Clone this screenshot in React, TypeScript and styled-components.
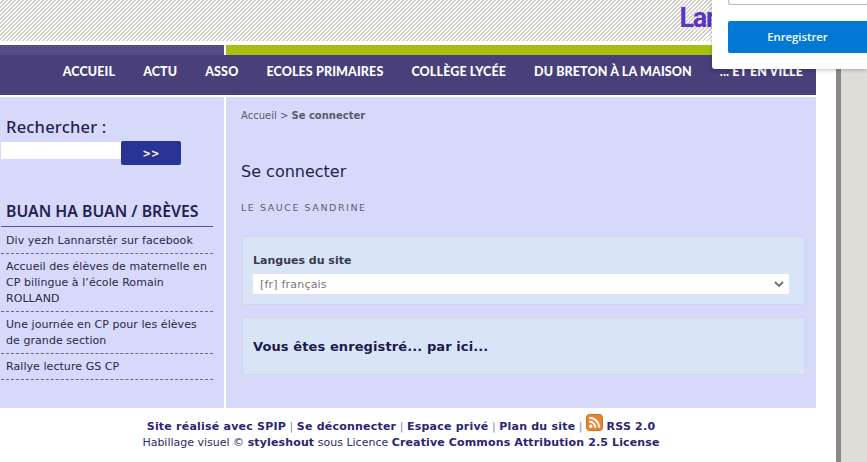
import React from 'react';
import styled, { createGlobalStyle } from 'styled-components';

const GlobalStyle = createGlobalStyle`
  html, body {
    margin: 0;
    padding: 0;
    background: #ffffff;
    overflow: hidden;
  }
`;

const Frame = styled.div`
  position: relative;
  display: flex;
  width: 867px;
  height: 462px;
  overflow: hidden;
  font-family: "DejaVu Sans", Verdana, sans-serif;
`;

const Site = styled.div`
  display: flex;
  flex-direction: column;
  width: 816px;
  flex-shrink: 0;
`;

const Rail = styled.div`
  width: 20px;
  flex-shrink: 0;
  background: #ffffff;
`;

const Edge = styled.div`
  width: 5px;
  flex-shrink: 0;
  background: #8a8883;
`;

const Backdrop = styled.div`
  flex: 1;
  background: #e0dcd8;
`;

const Stripes = styled.div`
  height: 41px;
  margin-right: -20px;
  background: repeating-linear-gradient(
    135deg,
    #ffffff 0,
    #ffffff 1.83px,
    #cfcfc8 1.83px,
    #cfcfc8 2.83px
  );
  display: flex;
  justify-content: flex-end;
`;

const Logo = styled.span`
  margin: 2px 116px 0 0;
  font-family: "Roboto", sans-serif;
  font-weight: 700;
  font-size: 27px;
  line-height: 33px;
  letter-spacing: -1.2px;
  color: #5b35c4;
`;

const ColorBand = styled.div`
  display: grid;
  grid-template-columns: 224px 2px 1fr;
  height: 10px;
  margin-top: 4px;
`;

const BandPart = styled.div<{ $color: string }>`
  background: ${(p) => p.$color};
`;

const Nav = styled.nav`
  display: flex;
  justify-content: flex-end;
  align-items: center;
  gap: 28px;
  box-sizing: border-box;
  height: 40px;
  padding: 0 13px 8px 0;
  background: #483f7b;
`;

const NavItem = styled.a`
  font-family: "Lato", sans-serif;
  font-weight: 900;
  font-size: 12.5px;
  letter-spacing: 0.12px;
  color: #ffffff;
  white-space: nowrap;
`;

const Columns = styled.div`
  display: grid;
  grid-template-columns: 224px 590px;
  column-gap: 2px;
  height: 311px;
  margin-top: 2px;
`;

const Sidebar = styled.aside`
  background: #d6d9f9;
  padding-top: 20px;
`;

const SearchTitle = styled.h2`
  margin: 0 0 4px 6px;
  font-family: "Noto Sans", sans-serif;
  font-weight: 500;
  font-size: 16.5px;
  line-height: 20px;
  letter-spacing: 0.2px;
  color: #241f52;
`;

const SearchRow = styled.form`
  display: flex;
  align-items: flex-start;
  margin-left: 1px;
`;

const SearchInput = styled.div`
  width: 120px;
  height: 17px;
  margin-top: 1px;
  background: #ffffff;
`;

const SearchButton = styled.button`
  width: 60px;
  height: 24px;
  padding: 0;
  border: none;
  border-radius: 2px;
  background: #2a3494;
  color: #ffffff;
  font-family: "DejaVu Sans", sans-serif;
  font-weight: 700;
  font-size: 10px;
`;

const NewsTitle = styled.h2`
  margin: 36px 11px 0 1px;
  padding: 0 0 5px 5px;
  border-bottom: 1px solid #5b5690;
  font-family: "Noto Sans", sans-serif;
  font-weight: 600;
  font-size: 15.8px;
  line-height: 20px;
  color: #241f52;
`;

const NewsList = styled.ul`
  margin: 0 11px 0 1px;
  padding: 1px 0 0;
  list-style: none;
`;

const NewsItem = styled.li`
  padding: 5px 5px 4px;
  border-bottom: 1px dashed #6a678c;
  font-size: 11px;
  line-height: 16px;
  letter-spacing: 0.06px;
  color: #2a2846;
`;

const Main = styled.main`
  background: #d6d9f9;
  padding: 12px 11px 0 15px;
`;

const Breadcrumb = styled.div`
  font-size: 10px;
  line-height: 13px;
  color: #5a5a70;

  strong {
    font-weight: 700;
  }
`;

const PageTitle = styled.h1`
  margin: 40px 0 0;
  font-family: "DejaVu Sans", sans-serif;
  font-weight: 400;
  font-size: 16px;
  line-height: 20px;
  color: #241f52;
`;

const Author = styled.div`
  margin-top: 20px;
  font-size: 9.5px;
  line-height: 12px;
  letter-spacing: 1.55px;
  color: #5f5f73;
`;

const Panel = styled.section<{ $height: number; $top: number }>`
  box-sizing: border-box;
  height: ${(p) => p.$height}px;
  margin: ${(p) => p.$top}px 0 0 1px;
  padding: 0 15px 0 10px;
  background: #d9e4f7;
  border: 1px solid #d2d6e8;
`;

const FieldLabel = styled.label`
  display: block;
  margin-top: 17px;
  font-size: 11px;
  font-weight: 700;
  line-height: 14px;
  color: #3b3b4c;
`;

const LanguageSelect = styled.div`
  display: flex;
  align-items: center;
  justify-content: space-between;
  height: 20px;
  margin-top: 6px;
  padding: 0 4px 0 7px;
  background: #ffffff;
  font-size: 11px;
  letter-spacing: 0.2px;
  color: #77777f;
`;

const Registered = styled.div`
  margin-top: 20px;
  font-size: 13px;
  font-weight: 700;
  line-height: 17px;
  letter-spacing: 0.1px;
  color: #1d1a4d;
`;

const Footer = styled.footer`
  padding: 11px 14px 0 0;
  text-align: center;
  font-size: 11px;
  line-height: 16px;
  color: #2d2a5e;
`;

const FooterLine = styled.div`
  white-space: nowrap;
`;

const FooterLink = styled.a<{ $tight?: boolean }>`
  font-weight: 700;
  letter-spacing: ${(p) => (p.$tight ? '0.14px' : '0.22px')};
  color: #2b2473;
`;

const Bar = styled.span`
  color: #7d8cb0;
`;

const RssIcon = styled.svg`
  width: 17px;
  height: 17px;
  vertical-align: -1px;
  margin: -5px 0 0;
`;

const Popup = styled.div`
  position: absolute;
  top: 0;
  left: 712px;
  right: 0;
  height: 69px;
  padding-left: 16px;
  background: #ffffff;
  border-bottom-left-radius: 3px;
  box-shadow: 0 1px 4px rgba(0, 0, 0, 0.25);
`;

const PopupField = styled.div`
  height: 4px;
  border: 1px solid #b9b9b9;
  border-top: none;
  border-right: none;
  border-bottom-left-radius: 3px;
`;

const SaveButton = styled.button`
  display: block;
  width: 100%;
  height: 32px;
  margin-top: 16px;
  padding: 0 0 2px;
  border: none;
  border-radius: 2px 0 0 2px;
  background: #0078d4;
  color: #ffffff;
  font-family: "Open Sans", sans-serif;
  font-weight: 600;
  font-size: 11.3px;
`;

const navLinks = [
  'ACCUEIL',
  'ACTU',
  'ASSO',
  'ECOLES PRIMAIRES',
  'COLLÈGE LYCÉE',
  'DU BRETON À LA MAISON',
  '... ET EN VILLE',
];

const news = [
  'Div yezh Lannarstêr sur facebook',
  'Accueil des élèves de maternelle en CP bilingue à l’école Romain ROLLAND',
  'Une journée en CP pour les élèves de grande section',
  'Rallye lecture GS CP',
];

const App: React.FC = () => {
  return (
    <Frame>
      <GlobalStyle />
      <Site>
        <Stripes>
          <Logo>Lan</Logo>
        </Stripes>
        <ColorBand>
          <BandPart $color="#554c8a" />
          <BandPart $color="#ffffff" />
          <BandPart $color="#a8bf12" />
        </ColorBand>
        <Nav>
          {navLinks.map((link) => (
            <NavItem key={link}>{link}</NavItem>
          ))}
        </Nav>
        <Columns>
          <Sidebar>
            <SearchTitle>Rechercher :</SearchTitle>
            <SearchRow>
              <SearchInput />
              <SearchButton type="button">&gt;&gt;</SearchButton>
            </SearchRow>
            <NewsTitle>BUAN HA BUAN / BRÈVES</NewsTitle>
            <NewsList>
              {news.map((item) => (
                <NewsItem key={item}>{item}</NewsItem>
              ))}
            </NewsList>
          </Sidebar>
          <Main>
            <Breadcrumb>
              Accueil &gt; <strong>Se connecter</strong>
            </Breadcrumb>
            <PageTitle>Se connecter</PageTitle>
            <Author>LE SAUCE SANDRINE</Author>
            <Panel $height={69} $top={22}>
              <FieldLabel>Langues du site</FieldLabel>
              <LanguageSelect>
                [fr] français
                <svg width="12" height="12" viewBox="0 0 12 12" fill="none">
                  <path d="M2 4l4 4 4-4" stroke="#6f6f6f" strokeWidth="1.8" />
                </svg>
              </LanguageSelect>
            </Panel>
            <Panel $height={58} $top={12}>
              <Registered>Vous êtes enregistré... par ici...</Registered>
            </Panel>
          </Main>
        </Columns>
        <Footer>
          <FooterLine>
            <FooterLink>Site réalisé avec SPIP</FooterLink> <Bar>|</Bar>{' '}
            <FooterLink>Se déconnecter</FooterLink> <Bar>|</Bar>{' '}
            <FooterLink>Espace privé</FooterLink> <Bar>|</Bar>{' '}
            <FooterLink>Plan du site</FooterLink> <Bar>|</Bar>{' '}
            <RssIcon viewBox="0 0 17 17">
              <rect x="0.5" y="0.5" width="16" height="16" rx="3" fill="#e8842c" stroke="#c96f20" />
              <circle cx="4.8" cy="12.2" r="1.7" fill="#fff" />
              <path d="M3.2 7.6a6.2 6.2 0 0 1 6.2 6.2M3.2 3.8a10 10 0 0 1 10 10" stroke="#fff" strokeWidth="2" fill="none" />
            </RssIcon>{' '}
            <FooterLink>RSS 2.0</FooterLink>
          </FooterLine>
          <FooterLine>
            Habillage visuel © <FooterLink $tight>styleshout</FooterLink> sous Licence{' '}
            <FooterLink $tight>Creative Commons Attribution 2.5 License</FooterLink>
          </FooterLine>
        </Footer>
      </Site>
      <Rail />
      <Edge />
      <Backdrop />
      <Popup>
        <PopupField />
        <SaveButton type="button">Enregistrer</SaveButton>
      </Popup>
    </Frame>
  );
};

export default App;
